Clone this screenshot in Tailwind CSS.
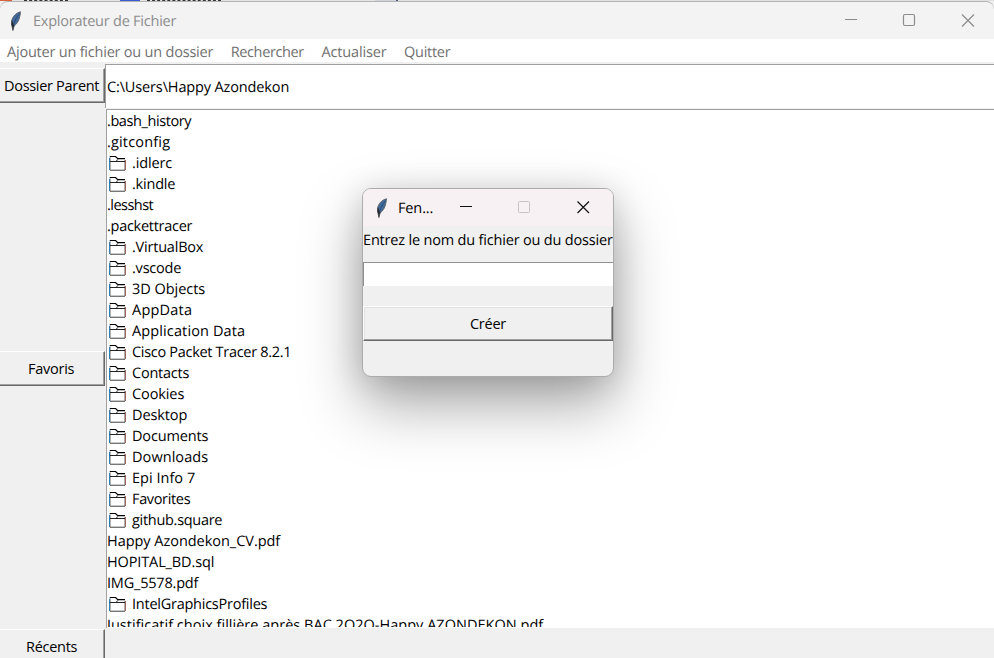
<!DOCTYPE html>
<html lang="fr">
<head>
<meta charset="utf-8">
<title>Explorateur de Fichier</title>
<script src="https://cdn.jsdelivr.net/npm/@tailwindcss/browser@4"></script>
</head>
<body class="w-[994px] h-[658px] overflow-hidden relative flex flex-col bg-[#f0f0f0] font-['Open_Sans','Noto_Sans',sans-serif] text-[14.5px] leading-[21px] text-black whitespace-nowrap [text-rendering:geometricPrecision]">
<svg class="hidden">
  <symbol id="feather" viewBox="0 0 12 20">
    <path d="M10.500 .8C7 1.500 3.500 4.500 2.200 8c-.8 2.500-.8 4.500-.2 6.200L3 15.800C7.500 13 9.800 8.500 10.500 .8z" fill="#41699c" stroke="#62666c" stroke-width="1"/>
    <path d="M2 9.500 1.700 13.500 2.900 19.500 4.200 14.500" fill="#222" stroke="#3b3d42" stroke-width=".8"/>
    <path d="M9.500 3C6.500 6 4.500 10 3.300 14.500" fill="none" stroke="#24446c" stroke-width=".8"/>
  </symbol>
  <symbol id="folder" viewBox="0 0 17 16">
    <path d="M.5 14V2" stroke="#2f7db5"/>
    <path d="M1.500 14V2" stroke="#555" stroke-opacity=".45"/>
    <path d="M16.500 14V4" stroke="#8a4436" stroke-opacity=".8"/>
    <path d="M15.500 14V4" stroke="#333" stroke-opacity=".4"/>
    <path d="M1 1.200Q1 .5 2 .5H6.500L8.800 2.700H16" fill="none" stroke="#000" stroke-width="1.200"/>
    <path d="M1 5.500H7L9 3.300M7 5.500H16" fill="none" stroke="#222" stroke-width="1"/>
    <path d="M1 14.300H16" stroke="#777" stroke-width="1.400"/>
  </symbol>
</svg>

<div class="h-px shrink-0 flex overflow-hidden bg-[#e4e4e4]">
  <div class="w-3 bg-[#d9623b]"></div><div class="w-[12px]"></div><div class="w-[44px] border-t border-dashed border-[#333]"></div><div class="w-[52px]"></div><div class="w-[20px] bg-[#3d5bd0]"></div><div class="w-[7px]"></div><div class="w-[74px] border-t border-dashed border-[#333]"></div><div class="w-[154px]"></div><div class="w-[21px] bg-[#d0d4d8]"></div><div class="w-[2px] bg-[#4a5a78]"></div><div class="flex-1 bg-[#dfe1e2]"></div>
</div>

<header class="h-[38px] shrink-0 border-t border-[#b4b4b4] rounded-t-lg bg-[#f3f3f3] flex items-center pl-[10px] text-[#8c8c8c]">
  <svg class="w-3 h-5 mr-[11px]"><use href="#feather"/></svg>
  <span class="pt-[2px]" data-w="143">Explorateur de Fichier</span>
  <svg class="ml-auto mr-[19px] w-[131px] h-5" viewBox="0 0 131 20" fill="none" stroke="#8c8c8c">
    <path d="M1 8.500H13"/><rect x="59.500" y="3.500" width="11" height="11" rx="1.500" stroke-width="1.200"/><path d="M118 3.500 130 15.500M130 3.500 118 15.500" stroke-width="1.200"/>
  </svg>
</header>

<nav class="h-[23px] shrink-0 bg-white flex items-center gap-[17.5px] pt-[4px] pl-[7px] text-[#707070]">
  <span data-w="206">Ajouter un fichier ou un dossier</span><span data-w="73">Rechercher</span><span data-w="65">Actualiser</span><span data-w="46">Quitter</span>
</nav>

<main class="flex-1 min-h-0 flex pt-[2px]">
  <aside class="w-[105px] shrink-0 flex flex-col pt-[4px]">
    <button class="shrink-0 h-[35px] border-t border-t-white border-r border-b border-r-[#696969] border-b-[#696969] shadow-[inset_-1px_-1px_0_#a0a0a0] pl-[4px] text-left"><span data-w="95">Dossier Parent</span></button>
    <button class="shrink-0 mt-[248px] h-[35px] border-t border-t-white border-r border-b border-r-[#696969] border-b-[#696969] shadow-[inset_-1px_-1px_0_#a0a0a0] pl-[28px] text-left"><span data-w="46">Favoris</span></button>
    <button class="shrink-0 mt-[243px] h-[35px] border-t border-t-white border-r border-b border-r-[#696969] border-b-[#696969] shadow-[inset_-1px_-1px_0_#a0a0a0] pl-[26px] text-left"><span data-w="51">Récents</span></button>
  </aside>
  <div class="flex-1 min-w-0 flex flex-col">
    <div class="h-[44px] shrink-0 bg-white border-t border-l border-[#a0a0a0] pl-px pt-[2px] flex items-center"><span data-w="182">C:\Users\Happy Azondekon</span></div>
    <div class="h-[519px] shrink-0 mt-px ml-px bg-white border-t border-l border-[#a0a0a0]">
      <ul id="files" class="h-[517px] overflow-hidden"></ul>
    </div>
  </div>
</main>

<section class="absolute left-[362px] top-[188px] w-[252px] h-[189px] rounded-[9px] border border-[#acacac] bg-[#f0f0f0] overflow-hidden shadow-[0_28px_60px_rgba(0,0,0,0.34),0_4px_32px_rgba(0,0,0,0.15)] flex flex-col">
  <div class="h-[37px] shrink-0 bg-[#f7f1f3] flex items-center pl-[13px]">
    <svg class="w-3 h-5 mr-[10px]"><use href="#feather"/></svg>
    <span class="pt-[2px]" data-w="35">Fen...</span>
    <svg class="ml-auto mr-[23px] w-[131px] h-5" viewBox="0 0 131 20" fill="none" stroke="#111">
      <path d="M1 8.500H13"/><rect x="59.500" y="3.500" width="11" height="11" rx="1" stroke="#c7c2c4"/><path d="M118.500 3.500 130 15M130 3.500 118.500 15" stroke-width="1.200"/>
    </svg>
  </div>
  <div class="h-[36px] shrink-0 pt-[4px]"><span data-w="249.5">Entrez le nom du fichier ou du dossier</span></div>
  <div class="h-[24px] shrink-0 bg-white border-t border-l border-[#909090]"></div>
  <button class="mt-[20px] h-[35px] shrink-0 border-t border-l border-t-white border-l-white border-r border-b border-r-[#696969] border-b-[#696969] shadow-[inset_-1px_-1px_0_#a0a0a0,inset_1px_1px_0_#e3e3e3]"><span data-w="36">Créer</span></button>
</section>

<script>
const files = [
  [0, ".bash_history", 84], [0, ".gitconfig", 63], [1, ".idlerc", 40], [1, ".kindle", 43], [0, ".lesshst", 46],
  [0, ".packettracer", 85], [1, ".VirtualBox", 71], [1, ".vscode", 49], [1, "3D Objects", 73], [1, "AppData", 60],
  [1, "Application Data", 113], [1, "Cisco Packet Tracer 8.2.1", 159], [1, "Contacts", 57], [1, "Cookies", 52],
  [1, "Desktop", 55], [1, "Documents", 76], [1, "Downloads", 76], [1, "Epi Info 7", 63], [1, "Favorites", 58],
  [1, "github.square", 90], [0, "Happy Azondekon_CV.pdf", 173], [0, "HOPITAL_BD.sql", 107], [0, "IMG_5578.pdf", 91],
  [1, "IntelGraphicsProfiles", 135], [0, "Justificatif choix fillière après BAC 2O2O-Happy AZONDEKON.pdf", 436]
];
document.getElementById("files").innerHTML = files.map(([dir, name, w]) =>
  `<li class="h-[21px] flex items-start">${dir ? '<svg class="w-[17px] h-4 ml-[2px] mr-[6px] mt-[4px]"><use href="#folder"/></svg>' : ''}<span class="mt-px" data-w="${w}">${name}</span></li>`).join("");
// Tighten each label's tracking to its nominal width.
function fit() {
  document.querySelectorAll("[data-w]").forEach(el => {
    el.style.display = "inline-block";
    el.style.letterSpacing = "0.001px";
    let s = 0.001;
    for (let i = 0; i < 3; i++) {
      s += (+el.dataset.w + 0.2 - el.getBoundingClientRect().width) / el.textContent.length;
      el.style.letterSpacing = s.toFixed(3) + "px";
    }
  });
}
fit();
document.fonts.ready.then(fit);
window.addEventListener("load", fit);
</script>
</body>
</html>
